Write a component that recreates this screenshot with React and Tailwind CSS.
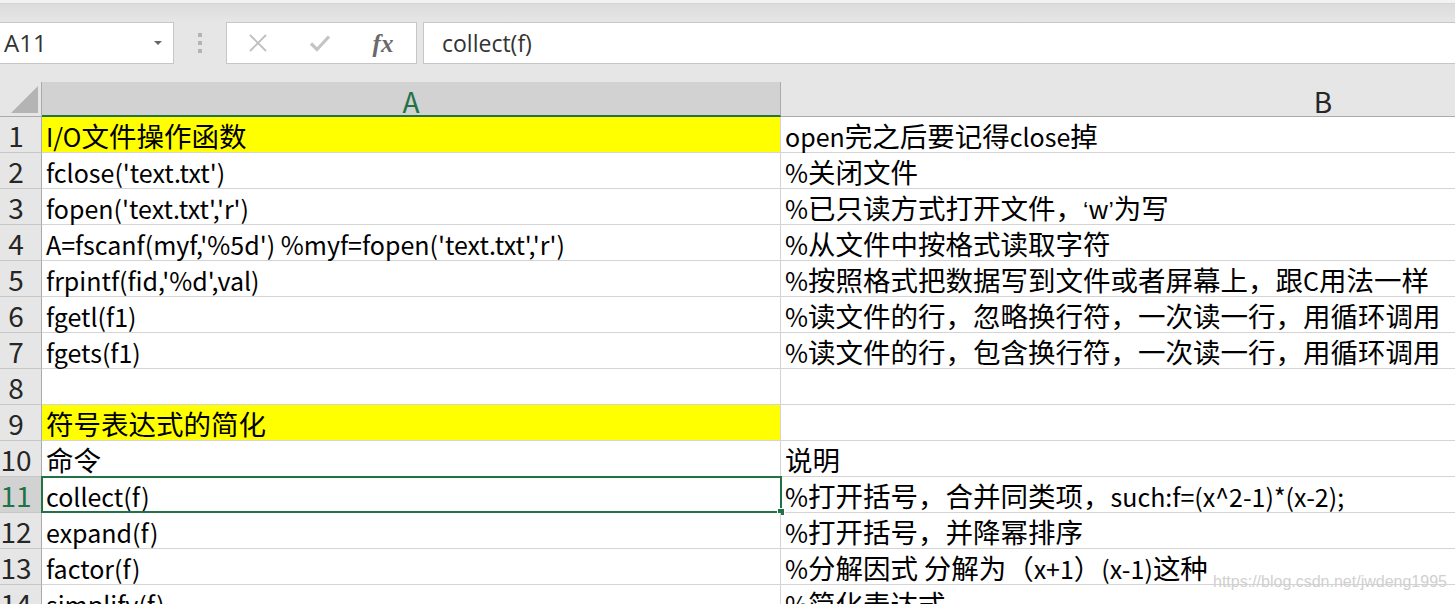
import React from "react";

const rows = [
  { n: 1, a: "I/O文件操作函数", b: "open完之后要记得close掉", y: true },
  { n: 2, a: "fclose('text.txt')", b: "%关闭文件" },
  { n: 3, a: "fopen('text.txt','r')", b: "%已只读方式打开文件，‘w’为写" },
  { n: 4, a: "A=fscanf(myf,'%5d') %myf=fopen('text.txt','r')", b: "%从文件中按格式读取字符" },
  { n: 5, a: "frpintf(fid,'%d',val)", b: "%按照格式把数据写到文件或者屏幕上，跟C用法一样" },
  { n: 6, a: "fgetl(f1)", b: "%读文件的行，忽略换行符，一次读一行，用循环调用" },
  { n: 7, a: "fgets(f1)", b: "%读文件的行，包含换行符，一次读一行，用循环调用" },
  { n: 8, a: "", b: "" },
  { n: 9, a: "符号表达式的简化", b: "", y: true },
  { n: 10, a: "命令", b: "说明" },
  { n: 11, a: "collect(f)", b: "%打开括号，合并同类项，such:f=(x^2-1)*(x-2);", sel: true },
  { n: 12, a: "expand(f)", b: "%打开括号，并降幂排序" },
  { n: 13, a: "factor(f)", b: "%分解因式 分解为（x+1）(x-1)这种" },
  { n: 14, a: "simplify(f)", b: "%简化表达式" },
];

const cellFont = { fontFamily: '"Noto Sans CJK SC", "Noto Sans", sans-serif' };
const quoteFont = { fontFamily: '"Liberation Sans", Arial, sans-serif' };

function Mixed({ text }) {
  const parts = text.match(/[\x00-\x7F]+|[‘’]+|[^\x00-\x7F‘’]+/g) || [];
  return parts.map((p, i) => {
    if (/^[‘’]+$/.test(p)) {
      return (
        <span key={i} className="text-[24px]" style={quoteFont}>
          {p}
        </span>
      );
    }
    if (/^[\x00-\x7F]+$/.test(p)) {
      return (
        <span key={i} className="text-[25px]">
          {p}
        </span>
      );
    }
    return <span key={i}>{p}</span>;
  });
}

export default function App() {
  return (
    <div className="w-[1455px] h-[604px] overflow-hidden bg-white relative" style={cellFont}>
      {/* Toolbar */}
      <div className="h-[82px] bg-[#e6e6e6] flex flex-col">
        <div className="h-[3px] bg-[#f2f2f2]" />
        <div className="h-[1px] bg-[#d6d6d6]" />
        <div className="h-[18px] bg-gradient-to-b from-[#dcdcdc] to-[#e6e6e6]" />
        <div className="h-[42px] flex items-stretch" style={{ fontFamily: '"Open Sans", "Noto Sans", sans-serif' }}>
          <div className="w-[174px] shrink-0 bg-white border border-l-0 border-[#c6c6c6] flex items-center justify-between pl-[4px] pr-[11px]">
            <span className="text-[24px] text-[#333] leading-none">A11</span>
            <svg width="8" height="5" viewBox="0 0 8 5"><path d="M0 0h8L4 4z" fill="#666" /></svg>
          </div>
          <div className="w-[52px] shrink-0 flex items-center justify-center">
            <div className="flex flex-col gap-[4px]">
              <div className="w-[4px] h-[4px] bg-[#b4b4b4]" />
              <div className="w-[4px] h-[4px] bg-[#b4b4b4]" />
              <div className="w-[4px] h-[4px] bg-[#b4b4b4]" />
            </div>
          </div>
          <div className="w-[191px] shrink-0 bg-white border border-[#c6c6c6] flex items-center">
            <div className="w-[61px] flex justify-center">
              <svg width="20" height="20" viewBox="0 0 20 20"><path d="M2 2L18 18M18 2L2 18" stroke="#bfbfbf" strokeWidth="1.8" /></svg>
            </div>
            <div className="w-[64px] flex justify-center">
              <svg width="22" height="18" viewBox="0 0 22 18"><path d="M2 9.5L8 15.5L20 2.5" stroke="#c4c4c4" strokeWidth="3.2" fill="none" /></svg>
            </div>
            <div className="w-[62px] flex justify-center">
              <span className="text-[25px] italic font-bold text-[#6a6a6a] leading-none" style={{ fontFamily: '"Liberation Serif", "DejaVu Serif", serif' }}>fx</span>
            </div>
          </div>
          <div className="w-[6px] shrink-0" />
          <div className="flex-1 bg-white border border-r-0 border-[#c6c6c6] flex items-center pl-[18px]">
            <span className="text-[23px] text-[#333] leading-none">collect(f)</span>
          </div>
        </div>
        <div className="h-[18px]" />
      </div>

      {/* Column headers */}
      <div className="flex h-[35px]">
        <div className="w-[42px] shrink-0 bg-[#e6e6e6] border-b border-r border-[#ababab] flex items-end justify-end pr-[2px] pb-[3px]">
          <svg width="28" height="27" viewBox="0 0 28 27"><path d="M27 0V27H0z" fill="#b4b4b4" /></svg>
        </div>
        <div className="w-[739px] shrink-0 bg-[#d2d2d2] border-r border-[#ababab] border-b-2 border-b-[#217346] flex items-center justify-center text-[28px] text-[#217346] leading-none pt-[4px]">A</div>
        <div className="w-[1084px] shrink-0 bg-[#e6e6e6] border-b border-[#ababab] flex items-center justify-center text-[28px] text-[#262626] leading-none pt-[4px]">B</div>
      </div>

      {/* Rows */}
      {rows.map((r) => (
        <div key={r.n} className="flex h-[36px]">
          <div className={`w-[42px] shrink-0 border-r border-b ${r.sel ? "bg-[#d2d2d2] text-[#217346]" : "bg-[#e6e6e6] text-[#262626]"} border-[#c6c6c6] border-r-[#ababab]`}>
            <div className="w-[32px] text-center text-[28px] leading-[36px]">{r.n}</div>
          </div>
          <div className={`w-[739px] shrink-0 border-r border-b border-[#d4d4d4] relative ${r.y ? "bg-[#ffff00]" : "bg-white"}`}>
            <div className="pl-[4px] text-[27.5px] leading-[36px] text-black whitespace-nowrap">
              <Mixed text={r.a} />
            </div>
            {r.sel && (
              <div className="absolute -left-[1px] -top-[1px] w-[741px] h-[37px] border-2 border-[#217346]">
                <div className="absolute -right-[5px] -bottom-[5px] w-[8px] h-[8px] bg-[#217346] border border-white" />
              </div>
            )}
          </div>
          <div className="w-[1084px] shrink-0 border-b border-[#d4d4d4] bg-white">
            <div className="pl-[4px] text-[27.5px] leading-[36px] text-black whitespace-nowrap">
              <Mixed text={r.b} />
            </div>
          </div>
        </div>
      ))}

      {/* Watermark */}
      <div
        className="absolute left-[1213px] top-[574px] text-[16px] text-[#d0d0d0] leading-none whitespace-nowrap"
        style={{ fontFamily: '"Liberation Sans", Arial, sans-serif' }}
      >
        https://blog.csdn.net/jwdeng1995
      </div>
    </div>
  );
}
